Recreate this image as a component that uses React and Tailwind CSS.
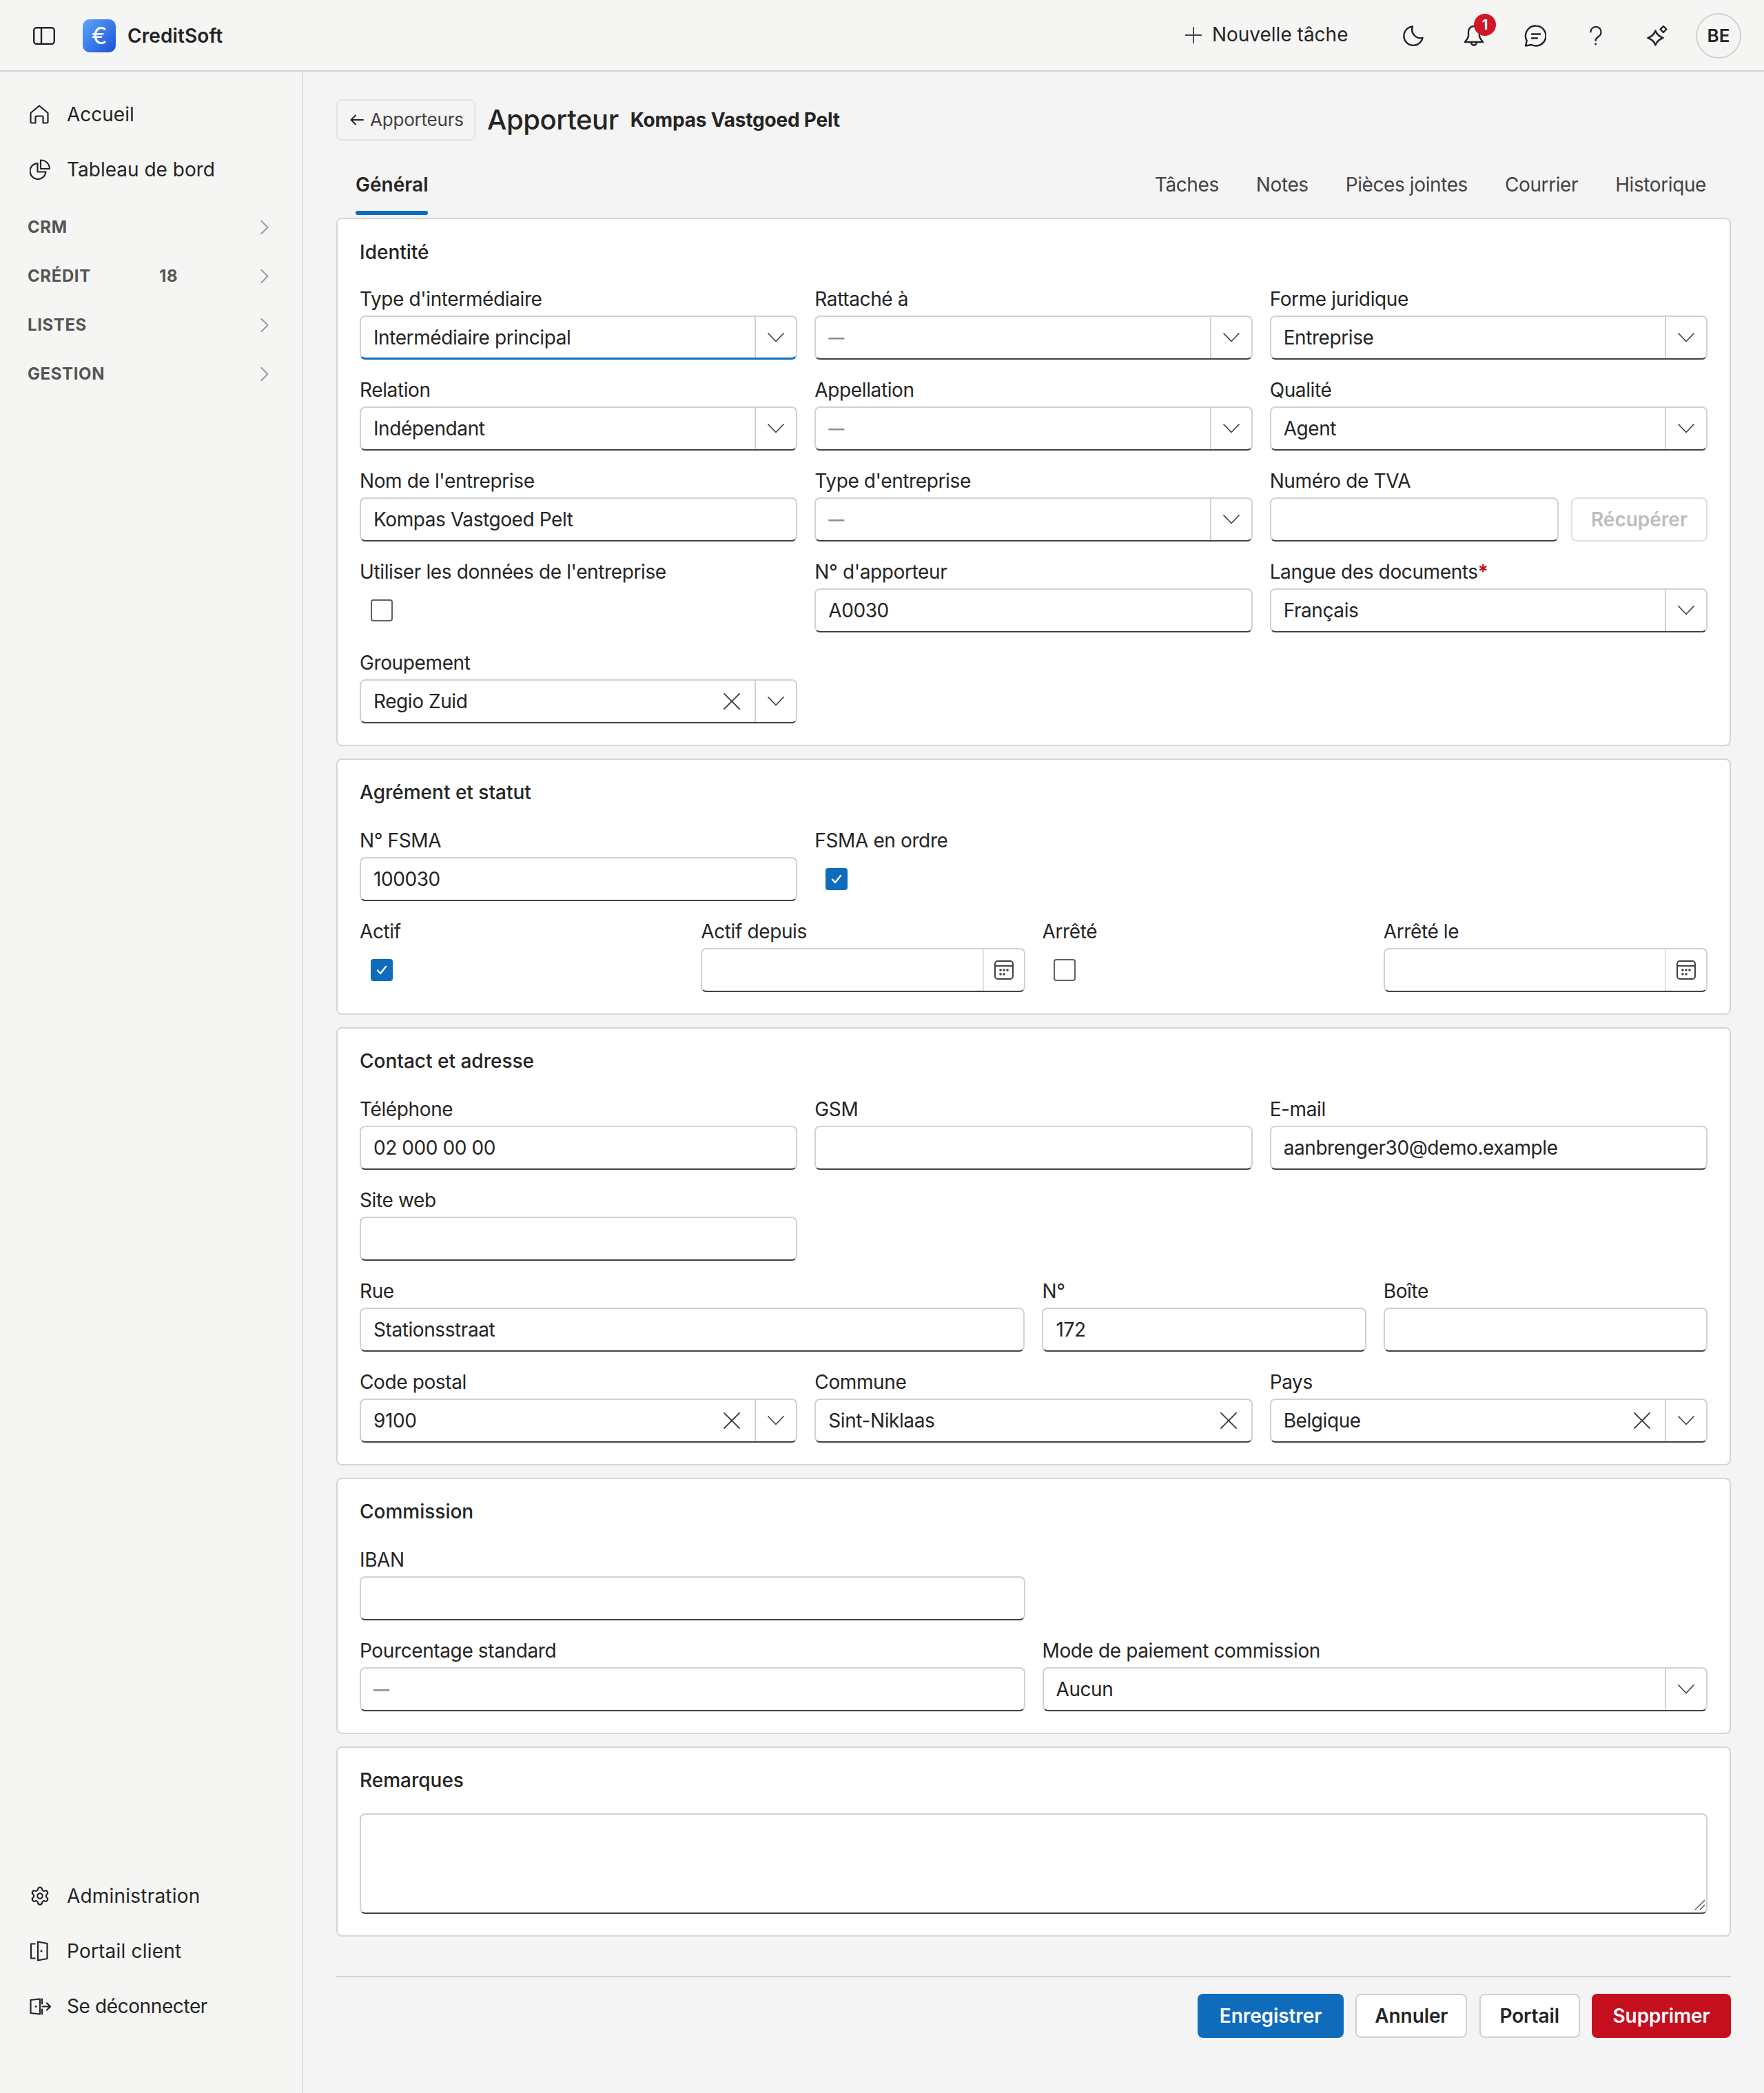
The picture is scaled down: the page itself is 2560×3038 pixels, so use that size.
import React from "react";
import { Settings } from "lucide-react";

const Chevron = () => (
  <svg width="24" height="14" viewBox="0 0 24 14" fill="none" stroke="#424242" strokeWidth="1.7" strokeLinecap="round" strokeLinejoin="round"><path d="M1 1l11 11.5L23 1" /></svg>
);
const Cross = () => (
  <svg width="24" height="24" viewBox="0 0 24 24" fill="none" stroke="#424242" strokeWidth="1.8" strokeLinecap="round"><path d="M1 1l22 22M23 1L1 23" /></svg>
);
const Calendar = () => (
  <svg width="28" height="28" viewBox="0 0 28 28" fill="none" stroke="#424242" strokeWidth="2"><rect x="1" y="1" width="26" height="26" rx="4" /><path d="M1 8h26" /><g fill="#424242" stroke="none"><circle cx="9" cy="14" r="1.8" /><circle cx="14" cy="14" r="1.8" /><circle cx="19" cy="14" r="1.8" /><circle cx="9" cy="20" r="1.8" /><circle cx="14" cy="20" r="1.8" /></g></svg>
);
const Check = () => (
  <svg width="16" height="14" viewBox="0 0 16 14" fill="none" stroke="#ffffff" strokeWidth="2.4" strokeLinecap="round" strokeLinejoin="round"><path d="M2 7.5l4 4.500 8-10" /></svg>
);

const Field = ({ label, req, className, children }) => (
  <div className={className}>
    <div className="h-[40px] mb-[4px] leading-[40px] text-[28px] tracking-[-0.38px] text-[#242424] whitespace-nowrap">
      {label}
      {req && <span className="text-[#c50f1f] font-semibold">*</span>}
    </div>
    {children}
  </div>
);

const box = "h-[64px] rounded-[8px] border-2 border-[#d1d1d1] bg-white flex items-center text-[28px] tracking-[-0.42px] text-[#242424]";
const mutedText = "text-[23px] font-semibold text-[#8f8f8f]";

const TextBox = ({ value, muted, className = "" }) => (
  <div className={`${box} border-b-[#424242] ${className}`}>
    <div className={`flex-1 pl-[18px] ${muted ? mutedText : ""}`}>{value}</div>
  </div>
);

const Select = ({ value, muted, clear, noChevron, focused }) => (
  <div className={`${box} ${focused ? "border-b-[3px] border-b-[#0f6cbd]" : "border-b-[#424242]"}`}>
    <div className={`flex-1 pl-[18px] ${focused ? "pt-[1px]" : ""} ${muted ? mutedText : ""}`}>{value}</div>
    {clear && <div className="flex items-center pr-[21px]"><Cross /></div>}
    {!noChevron && <div className="w-[2px] self-stretch bg-[#d1d1d1]" />}
    {!noChevron && <div className="w-[58px] flex items-center justify-center"><Chevron /></div>}
  </div>
);

const DateBox = () => (
  <div className={`${box} border-b-[#424242]`}>
    <div className="flex-1" />
    <div className="w-[2px] self-stretch bg-[#e0e0e0]" />
    <div className="w-[58px] flex items-center justify-center"><Calendar /></div>
  </div>
);

const Checkbox = ({ checked }) => (
  <div className="h-[64px] flex items-center pl-[16px]">
    {checked ? (
      <div className="w-[32px] h-[32px] rounded-[4px] bg-[#0f6cbd] flex items-center justify-center"><Check /></div>
    ) : (
      <div className="w-[32px] h-[32px] rounded-[4px] border-2 border-[#616161] bg-white" />
    )}
  </div>
);

const Card = ({ title, children, first, tight }) => (
  <section className={`rounded-[8px] border-2 border-[#d6d6d6] bg-white px-[32px] pb-[31px] ${first ? "pt-[31px]" : "pt-[30px]"}`}>
    <h2 className={`text-[28px] leading-[34px] font-medium text-[#242424] ${first ? "mb-[31px]" : tight ? "mb-[31px]" : "mb-[33px]"}`}>{title}</h2>
    {children}
  </section>
);

const Grid = ({ children }) => <div className="grid grid-cols-12 gap-x-[25px] gap-y-[24px]">{children}</div>;

const NavItem = ({ icon, children, track = "" }) => (
  <div className="h-[80px] flex items-center pl-[43px] text-[28px] text-[#242424]">
    <div className="w-[54px] flex items-center">{icon}</div>
    <span className={track}>{children}</span>
  </div>
);

const NavGroup = ({ label, count }) => (
  <div className="h-[71px] flex items-center pl-[40px] pr-[48px] text-[24px] font-bold tracking-[0.6px] text-[#555555]">
    <div className="w-[191px]">{label}</div>
    <div className="flex-1">{count}</div>
    <svg width="12" height="20" viewBox="0 0 12 20" fill="none" stroke="#9a9a9a" strokeWidth="2" strokeLinecap="round" strokeLinejoin="round"><path d="M1.500 1l9 9-9 9" /></svg>
  </div>
);

const Tab = ({ children }) => (
  <div className="mx-[27px] h-[88px] flex flex-col text-[28px] tracking-[-0.4px] text-[#424242]">
    <div className="flex-1 flex items-center pt-[6px]">{children}</div>
    <div className="h-[6px]" />
  </div>
);

const TopIcon = ({ children }) => <div className="relative w-[88.5px] flex items-center justify-center">{children}</div>;

const Btn = ({ children, kind, w }) => {
  const k =
    kind === "primary" ? "bg-[#0f6cbd] text-white" :
    kind === "danger" ? "bg-[#c50f1f] text-white" :
    "bg-white text-[#242424] border-2 border-[#d1d1d1]";
  return <div className={`h-[64px] rounded-[8px] flex items-center justify-center text-[28px] tracking-[-0.1px] font-semibold ${w} ${k}`}>{children}</div>;
};

export default function App() {
  return (
    <div className="w-[2560px] h-[3038px] flex flex-col bg-[#f4f4f4] font-['Inter',sans-serif] overflow-hidden">
      <header className="h-[104px] shrink-0 border-b-2 border-[#d1d1d1] bg-[#f5f5f3] flex items-center pt-[2px]">
        <div className="ml-[48px] w-[32px]">
          <svg width="32" height="26" viewBox="0 0 32 26" fill="none" stroke="#242424" strokeWidth="2.4" className="block"><rect x="1.200" y="1.200" width="29.600" height="23.600" rx="4" /><path d="M12 1.200v23.600" /></svg>
        </div>
        <div className="ml-[40px] w-[48px] h-[48px] rounded-[10px] bg-linear-to-br from-[#60a5fa] to-[#1d4ed8] flex items-center justify-center text-white text-[34px] leading-none">€</div>
        <div className="ml-[17px] text-[28px] tracking-[0.1px] font-semibold text-[#242424]">CreditSoft</div>
        <div className="flex-1" />
        <svg width="24" height="24" viewBox="0 0 24 24" fill="none" stroke="#424242" strokeWidth="1.800" className="mr-[15px] mb-[2px]"><path d="M12 0v24M0 12h24" /></svg>
        <div className="text-[28px] text-[#242424] mb-[4px]">Nouvelle tâche</div>
        <div className="ml-[50px] flex items-center self-stretch">
          <TopIcon>
            <svg width="30" height="30" viewBox="0 0 30 30" fill="none" stroke="#242424" strokeWidth="2.4" strokeLinejoin="round"><path d="M14 1.500A13.700 13.700 0 1 0 28.500 18 A12.500 12.500 0 0 1 14 1.500Z" /></svg>
          </TopIcon>
          <TopIcon>
            <svg width="30" height="32" viewBox="0 0 30 32" fill="none" stroke="#242424" strokeWidth="2.4" strokeLinejoin="round" strokeLinecap="round"><path d="M15 2c-6 0-8 5-8 9v5c0 3-3 6-5 9h26c-2-3-5-6-5-9v-5c0-4-2-9-8-9z" /><path d="M11 25.500a4 4 0 0 0 8 0" /></svg>
            <div className="absolute left-[44px] -top-[16px] w-[32px] h-[32px] rounded-full bg-[#d01627] flex items-center justify-center text-white text-[20px] font-bold leading-none">1</div>
          </TopIcon>
          <TopIcon>
            <svg width="32" height="32" viewBox="0 0 32 32" fill="none" stroke="#242424" strokeWidth="2.4" strokeLinejoin="round" strokeLinecap="round"><path d="M17 1.500A14.500 14.500 0 1 1 10.500 29 L2 30.500 L3.800 23 A14.500 14.500 0 0 1 17 1.500Z" /><path d="M11 13.500h12M11 19.500h8" /></svg>
          </TopIcon>
          <TopIcon>
            <svg width="18" height="28" viewBox="0 0 18 28" fill="none" stroke="#242424" strokeWidth="2.2" strokeLinecap="round"><path d="M1.500 8.500a7.500 7.500 0 1 1 12 6c-3 2.200-4.800 3-4.800 6.500" /><circle cx="8.700" cy="26" r="1.400" fill="#242424" stroke="none" /></svg>
          </TopIcon>
          <TopIcon>
            <svg width="30" height="30" viewBox="0 0 30 30" fill="none" stroke="#242424" strokeWidth="2.4" strokeLinejoin="round"><path d="M12.500 7.500 Q15 15 23.500 18 Q15 21 12.500 28.500 Q10 21 1.500 18 Q10 15 12.500 7.500Z" /><path d="M24 1.200 L28.500 5.500 L24 9.800 L19.500 5.500Z" /></svg>
          </TopIcon>
        </div>
        <div className="ml-[12px] mr-[33px] mb-[1px] w-[66px] h-[66px] rounded-full border-2 border-[#d1d1d1] flex items-center justify-center text-[26px] font-semibold text-[#242424]">BE</div>
      </header>

      <div className="flex-1 flex min-h-0">
        <aside className="w-[440px] shrink-0 border-r-2 border-[#dfe1e4] bg-[#f5f5f3] flex flex-col justify-between pt-[22px] pb-[86px]">
          <div>
            <NavItem icon={
              <svg width="28" height="28" viewBox="0 0 28 28" fill="none" stroke="#242424" strokeWidth="2.2" strokeLinejoin="round"><path d="M14 1.500L26.500 12v13a1.500 1.500 0 0 1-1.500 1.500h-5.500V18a1.500 1.500 0 0 0-1.500-1.500h-8A1.500 1.500 0 0 0 8.500 18v8.500H3A1.500 1.500 0 0 1 1.500 25V12z" /></svg>
            }>Accueil</NavItem>
            <NavItem icon={
              <svg width="30" height="30" viewBox="0 0 30 30" fill="none" stroke="#242424" strokeWidth="2.2" strokeLinejoin="round"><path d="M11.500 6A11.500 11.500 0 1 0 23.500 18.500H11.500z" /><path d="M16 1.500A12.500 12.500 0 0 1 29 14H16z" /></svg>
            }>Tableau de bord</NavItem>
            <div className="h-[8px]" />
            <NavGroup label="CRM" />
            <NavGroup label="CRÉDIT" count="18" />
            <NavGroup label="LISTES" />
            <NavGroup label="GESTION" />
          </div>
          <div>
            <NavItem track="tracking-[0.2px]" icon={<Settings size={30} strokeWidth={1.7} color="#242424" />}>Administration</NavItem>
            <NavItem track="tracking-[0.2px]" icon={
              <svg width="28" height="30" viewBox="0 0 28 30" fill="none" stroke="#242424" strokeWidth="2.2" strokeLinejoin="round"><path d="M8.500 4.500H2v21h6.500" /><path d="M12 1.500l13.500 2.500v22l-13.500 2.500z" /><circle cx="17" cy="15" r="1.500" fill="#242424" stroke="none" /></svg>
            }>Portail client</NavItem>
            <NavItem track="tracking-[-0.4px]" icon={
              <svg width="31" height="25" viewBox="0 0 31 25" fill="none" stroke="#242424" strokeWidth="2.2" strokeLinejoin="round" strokeLinecap="round"><path d="M15 1.500L1.500 3v19l13.500 1.500z" /><circle cx="9" cy="12.500" r="1.400" fill="#242424" stroke="none" /><path d="M18 1.500v7M18 16.500v7M18.500 12.500h11M25 7.500l5 5-5 5" /></svg>
            }>Se déconnecter</NavItem>
          </div>
        </aside>

        <main className="flex-1 min-w-0 px-[48px] pt-[40px]">
          <div className="h-[60px] flex items-center">
            <div className="h-[60px] w-[202px] rounded-[8px] border-2 border-[#e0e3e7] flex items-center pl-[18px] pb-[1px] text-[26px] tracking-[-0.2px] text-[#424242]">
              <svg width="20" height="16" viewBox="0 0 20 16" fill="none" stroke="#242424" strokeWidth="2" strokeLinecap="round" strokeLinejoin="round" className="mr-[9px]"><path d="M19 8H1.500M8 1.500L1.500 8 8 14.500" /></svg>
              Apporteurs
            </div>
            <h1 className="ml-[17px] text-[40px] tracking-[-0.4px] font-medium text-[#242424] leading-none">Apporteur</h1>
            <div className="ml-[17px] text-[28px] font-bold tracking-[-0.2px] text-[#242424]">Kompas Vastgoed Pelt</div>
          </div>

          <div className="mt-[20px] mb-[4px] flex">
            <div className="ml-[28px] h-[88px] flex flex-col text-[28px] font-semibold text-[#242424]">
              <div className="flex-1 flex items-center pt-[6px]">Général</div>
              <div className="h-[6px] rounded-full bg-[#0f6cbd]" />
            </div>
            <div className="flex-1" />
            <Tab>Tâches</Tab>
            <Tab>Notes</Tab>
            <Tab>Pièces jointes</Tab>
            <Tab>Courrier</Tab>
            <div className="mr-[9px]"><Tab>Historique</Tab></div>
          </div>

          <div className="flex flex-col gap-[18px]">
            <Card title="Identité" first>
              <Grid>
                <Field className="col-span-4" label="Type d'intermédiaire"><Select value="Intermédiaire principal" focused /></Field>
                <Field className="col-span-4" label="Rattaché à"><Select value="—" muted /></Field>
                <Field className="col-span-4" label="Forme juridique"><Select value="Entreprise" /></Field>
                <Field className="col-span-4" label="Relation"><Select value="Indépendant" /></Field>
                <Field className="col-span-4" label="Appellation"><Select value="—" muted /></Field>
                <Field className="col-span-4" label="Qualité"><Select value="Agent" /></Field>
                <Field className="col-span-4" label="Nom de l'entreprise"><TextBox value="Kompas Vastgoed Pelt" /></Field>
                <Field className="col-span-4" label="Type d'entreprise"><Select value="—" muted /></Field>
                <Field className="col-span-4" label="Numéro de TVA">
                  <div className="flex gap-[18px]">
                    <TextBox value="" className="flex-1" />
                    <div className="w-[198px] h-[64px] rounded-[8px] border-2 border-[#e0e0e0] flex items-center justify-center text-[28px] font-semibold text-[#bdbdbd]">Récupérer</div>
                  </div>
                </Field>
                <Field className="col-span-4" label="Utiliser les données de l'entreprise"><Checkbox /></Field>
                <Field className="col-span-4" label="N° d'apporteur"><TextBox value="A0030" /></Field>
                <Field className="col-span-4" label="Langue des documents" req><Select value="Français" /></Field>
                <Field className="col-span-4" label="Groupement"><Select value="Regio Zuid" clear /></Field>
              </Grid>
            </Card>

            <Card title="Agrément et statut">
              <Grid>
                <Field className="col-span-4" label="N° FSMA"><TextBox value="100030" /></Field>
                <Field className="col-span-8" label="FSMA en ordre"><Checkbox checked /></Field>
                <Field className="col-span-3" label="Actif"><Checkbox checked /></Field>
                <Field className="col-span-3" label="Actif depuis"><DateBox /></Field>
                <Field className="col-span-3" label="Arrêté"><Checkbox /></Field>
                <Field className="col-span-3" label="Arrêté le"><DateBox /></Field>
              </Grid>
            </Card>

            <Card title="Contact et adresse">
              <Grid>
                <Field className="col-span-4" label="Téléphone"><TextBox value="02 000 00 00" /></Field>
                <Field className="col-span-4" label="GSM"><TextBox value="" /></Field>
                <Field className="col-span-4" label="E-mail"><TextBox value="aanbrenger30@demo.example" /></Field>
                <Field className="col-span-4" label="Site web"><TextBox value="" /></Field>
                <Field className="col-span-6 col-start-1" label="Rue"><TextBox value="Stationsstraat" /></Field>
                <Field className="col-span-3" label="N°"><TextBox value="172" /></Field>
                <Field className="col-span-3" label="Boîte"><TextBox value="" /></Field>
                <Field className="col-span-4" label="Code postal"><Select value="9100" clear /></Field>
                <Field className="col-span-4" label="Commune"><Select value="Sint-Niklaas" clear noChevron /></Field>
                <Field className="col-span-4" label="Pays"><Select value="Belgique" clear /></Field>
              </Grid>
            </Card>

            <Card title="Commission">
              <Grid>
                <Field className="col-span-6" label="IBAN"><TextBox value="" /></Field>
                <div className="col-span-6" />
                <Field className="col-span-6" label="Pourcentage standard"><TextBox value="—" muted /></Field>
                <Field className="col-span-6" label="Mode de paiement commission"><Select value="Aucun" /></Field>
              </Grid>
            </Card>

            <Card title="Remarques" tight>
              <div className="relative">
                <textarea readOnly className="block w-full h-[146px] rounded-[8px] border-2 border-[#d1d1d1] border-b-[#424242] bg-white resize-none outline-none" />
                <svg width="16" height="16" viewBox="0 0 16 16" fill="none" stroke="#555555" strokeWidth="1.400" className="absolute right-[3px] bottom-[5px]"><path d="M15 1L1 15M15 8l-7 7" /></svg>
              </div>
            </Card>
          </div>

          <div className="mt-[57px] border-t-2 border-[#d1d1d1] pt-[24px] flex justify-end gap-[17.33px]">
            <Btn kind="primary" w="w-[212px]">Enregistrer</Btn>
            <Btn w="w-[162px]">Annuler</Btn>
            <Btn w="w-[146px]">Portail</Btn>
            <Btn kind="danger" w="w-[202px]">Supprimer</Btn>
          </div>
        </main>
      </div>
    </div>
  );
}
